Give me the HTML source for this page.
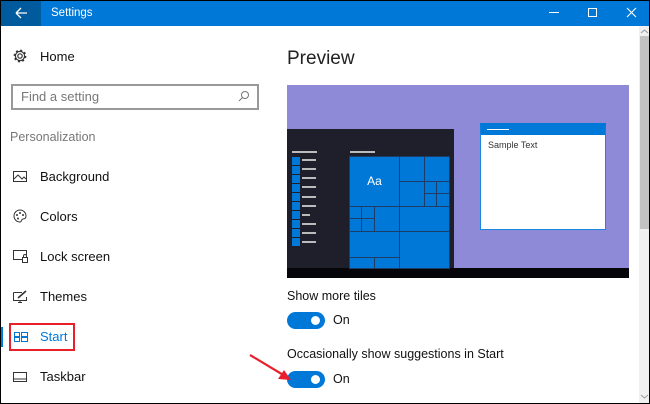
<!DOCTYPE html>
<html><head><meta charset="utf-8"><style>
*{margin:0;padding:0;box-sizing:border-box}
body{width:650px;height:404px;overflow:hidden;background:#fff;font-family:"Liberation Sans",sans-serif;position:relative}
.a{position:absolute}
.frame{left:0;top:0;width:650px;height:404px;border:1px solid #000;z-index:50;pointer-events:none}
.tb{left:0;top:0;width:650px;height:26px;background:#0078d7}
.back{left:0;top:0;width:41px;height:26px;background:#005a9e}
.t{color:#fff;font-size:11.5px;left:51px;top:7px}
.nav{font-size:13px;color:#111}
.tile{position:absolute;background:#0078d7;outline:1px solid #1e3d66}
.ln{position:absolute;height:2px;background:#bbb}
.sq{position:absolute;width:8px;height:8px;background:#0078d7}
.tog{width:38px;height:17px;border-radius:9px;background:#0078d7}
.tog::after{content:"";position:absolute;right:5px;top:4px;width:9px;height:9px;border-radius:50%;background:#fff}
</style></head><body>
<div class="a frame"></div>
<div class="a tb"></div><div class="a back"></div>
<svg class="a" style="left:14px;top:6px" width="14" height="14"><path d="M2 7H13M2 7L7 2M2 7L7 12" stroke="#fff" stroke-width="1.3" fill="none"/></svg>
<div class="a t">Settings</div>
<div class="a" style="left:549px;top:12px;width:10px;height:1px;background:#fff"></div>
<div class="a" style="left:588px;top:8px;width:9px;height:9px;border:1px solid #fff"></div>
<svg class="a" style="left:626px;top:7px" width="11" height="11"><path d="M1 1L10 10M10 1L1 10" stroke="#fff" stroke-width="1.1"/></svg>

<svg class="a" style="left:13px;top:49px" width="14" height="14" viewBox="0 0 14 14"><circle cx="7" cy="7" r="2.2" fill="none" stroke="#333" stroke-width="1.2"/><circle cx="7" cy="7" r="4.6" fill="none" stroke="#333" stroke-width="1.2"/><circle cx="7" cy="7" r="5.6" fill="none" stroke="#333" stroke-width="1.6" stroke-dasharray="2 2.4"/></svg>
<div class="a nav" style="left:40px;top:49px">Home</div>
<div class="a" style="left:11px;top:84px;width:248px;height:26px;border:2px solid #999"></div>
<div class="a" style="left:21px;top:89px;font-size:13px;color:#777">Find a setting</div>
<svg class="a" style="left:238px;top:90px" width="12" height="12"><circle cx="7" cy="5" r="3.5" fill="none" stroke="#777"/><path d="M4.5 7.5L1 11" stroke="#777"/></svg>
<div class="a" style="left:10px;top:130px;font-size:12.5px;color:#777">Personalization</div>

<svg class="a" style="left:13px;top:171px" width="14" height="12"><rect x="0.5" y="0.5" width="13" height="10" fill="none" stroke="#333"/><path d="M1 8L5 4L9 8L11 6L13 8" fill="none" stroke="#333"/></svg>
<div class="a nav" style="left:40px;top:169px">Background</div>
<svg class="a" style="left:13px;top:209px" width="14" height="14"><path d="M7 1A6 6 0 1 0 7 13C9 13 8 10 10 10C13 10 13 8 13 7A6 6 0 0 0 7 1Z" fill="none" stroke="#333"/><circle cx="4" cy="6" r="1" fill="#333"/><circle cx="7" cy="4" r="1" fill="#333"/><circle cx="10" cy="6" r="1" fill="#333"/><circle cx="5" cy="9.5" r="1" fill="#333"/></svg>
<div class="a nav" style="left:40px;top:209px">Colors</div>
<svg class="a" style="left:13px;top:250px" width="15" height="13"><path d="M9 9.5H0.5V0.5H13.5V5" fill="none" stroke="#333"/><rect x="9.5" y="7.5" width="5" height="5" fill="none" stroke="#333"/><path d="M10.5 7.5V6A1.5 1.5 0 0 1 13.5 6V7.5" fill="none" stroke="#333"/></svg>
<div class="a nav" style="left:40px;top:249px">Lock screen</div>
<svg class="a" style="left:13px;top:290px" width="15" height="13"><path d="M0.5 2.5H9M0.5 2.5V10.5H13.5V7M5 12.5H9M7 10.5V12.5" fill="none" stroke="#333"/><path d="M5 8L13 1" stroke="#333" stroke-width="1.6"/></svg>
<div class="a nav" style="left:40px;top:289px">Themes</div>
<div class="a" style="left:0;top:327px;width:3px;height:20px;background:#0078d7"></div>
<div class="a" style="left:9px;top:323px;width:66px;height:28px;border:2px solid #e8202c"></div>
<svg class="a" style="left:14px;top:332px" width="14" height="10"><rect x="0.5" y="0.5" width="5" height="4" fill="none" stroke="#0078d7"/><rect x="7.5" y="0.5" width="6" height="4" fill="none" stroke="#0078d7"/><rect x="0.5" y="5.5" width="5" height="4" fill="none" stroke="#0078d7"/><rect x="7.5" y="5.5" width="6" height="4" fill="none" stroke="#0078d7"/></svg>
<div class="a nav" style="left:40px;top:329px;color:#0078d7">Start</div>
<svg class="a" style="left:13px;top:372px" width="15" height="10"><rect x="0.5" y="0.5" width="13" height="9" fill="none" stroke="#333"/><path d="M1 7H13" stroke="#333"/></svg>
<div class="a nav" style="left:40px;top:369px">Taskbar</div>

<div class="a" style="left:287px;top:48px;font-size:19px;color:#222">Preview</div>
<div class="a" style="left:287px;top:85px;width:342px;height:193px;background:#8e8ad8"></div>
<div class="a" style="left:287px;top:129px;width:167px;height:140px;background:#1f1f2b"></div>
<div class="a" style="left:287px;top:268px;width:342px;height:10px;background:#06060a"></div>
<div class="ln" style="left:292px;top:151px;width:25px"></div>
<div class="ln" style="left:350px;top:151px;width:25px"></div>
<div class="sq" style="left:292px;top:157px"></div><div class="ln" style="left:302px;top:159px;width:14px"></div>
<div class="sq" style="left:292px;top:166px"></div><div class="ln" style="left:302px;top:168px;width:14px"></div>
<div class="sq" style="left:292px;top:175px"></div><div class="ln" style="left:302px;top:177px;width:14px"></div>
<div class="sq" style="left:292px;top:184px"></div><div class="ln" style="left:302px;top:186px;width:14px"></div>
<div class="sq" style="left:292px;top:193px"></div><div class="ln" style="left:302px;top:196px;width:14px"></div>
<div class="sq" style="left:292px;top:202px"></div><div class="ln" style="left:302px;top:205px;width:14px"></div>
<div class="sq" style="left:292px;top:211px"></div><div class="ln" style="left:302px;top:214px;width:8px"></div>
<div class="sq" style="left:292px;top:220px"></div><div class="ln" style="left:302px;top:223px;width:14px"></div>
<div class="sq" style="left:292px;top:229px"></div><div class="ln" style="left:302px;top:232px;width:14px"></div>
<div class="sq" style="left:292px;top:238px"></div><div class="ln" style="left:302px;top:241px;width:14px"></div>

<div class="tile" style="left:350px;top:157px;width:49px;height:49px;color:#fff;font-size:12px;text-align:center;line-height:49px">Aa</div>
<div class="tile" style="left:400px;top:157px;width:24px;height:24px"></div>
<div class="tile" style="left:425px;top:157px;width:24px;height:24px"></div>
<div class="tile" style="left:400px;top:182px;width:24px;height:24px"></div>
<div class="tile" style="left:425px;top:182px;width:12px;height:12px"></div>
<div class="tile" style="left:437px;top:182px;width:12px;height:12px"></div>
<div class="tile" style="left:425px;top:194px;width:12px;height:12px"></div>
<div class="tile" style="left:437px;top:194px;width:12px;height:12px"></div>
<div class="tile" style="left:350px;top:207px;width:12px;height:12px"></div>
<div class="tile" style="left:362px;top:207px;width:12px;height:12px"></div>
<div class="tile" style="left:350px;top:219px;width:12px;height:12px"></div>
<div class="tile" style="left:362px;top:219px;width:12px;height:12px"></div>
<div class="tile" style="left:375px;top:207px;width:24px;height:24px"></div>
<div class="tile" style="left:400px;top:207px;width:49px;height:24px"></div>
<div class="tile" style="left:350px;top:232px;width:49px;height:25px"></div>
<div class="tile" style="left:400px;top:232px;width:49px;height:36px"></div>
<div class="tile" style="left:350px;top:258px;width:24px;height:10px"></div>
<div class="tile" style="left:375px;top:258px;width:24px;height:10px"></div>

<div class="a" style="left:480px;top:123px;width:126px;height:107px;background:#fff;border:1px solid #1a86e0;border-top:12px solid #0078d7"></div>
<div class="a" style="left:487px;top:129px;width:22px;height:1px;background:#fff"></div>
<div class="a" style="left:488px;top:140px;font-size:9px;color:#333">Sample Text</div>

<div class="a" style="left:287px;top:289px;font-size:12.5px;color:#111">Show more tiles</div>
<div class="a tog" style="left:287px;top:312px"></div>
<div class="a" style="left:333px;top:313px;font-size:12.5px;color:#111">On</div>
<div class="a" style="left:287px;top:347px;font-size:12.5px;color:#111">Occasionally show suggestions in Start</div>
<div class="a tog" style="left:287px;top:371px"></div>
<div class="a" style="left:333px;top:372px;font-size:12.5px;color:#111">On</div>
<svg class="a" style="left:245px;top:350px" width="50" height="35"><path d="M5 5L40 26" stroke="#e8202c" stroke-width="2.2"/><path d="M46 30L33 29L39 20Z" fill="#e8202c"/></svg>

<div class="a" style="left:639px;top:26px;width:10px;height:377px;background:#f0f0f0"></div>
<div class="a" style="left:640px;top:36px;width:9px;height:193px;background:#c2c2c2"></div>
<svg class="a" style="left:640px;top:28px" width="9" height="6"><path d="M1 5L4.5 2L8 5" stroke="#999" fill="none"/></svg>
<svg class="a" style="left:640px;top:394px" width="9" height="6"><path d="M1 1L4.5 4L8 1" stroke="#999" fill="none"/></svg>
</body></html>
